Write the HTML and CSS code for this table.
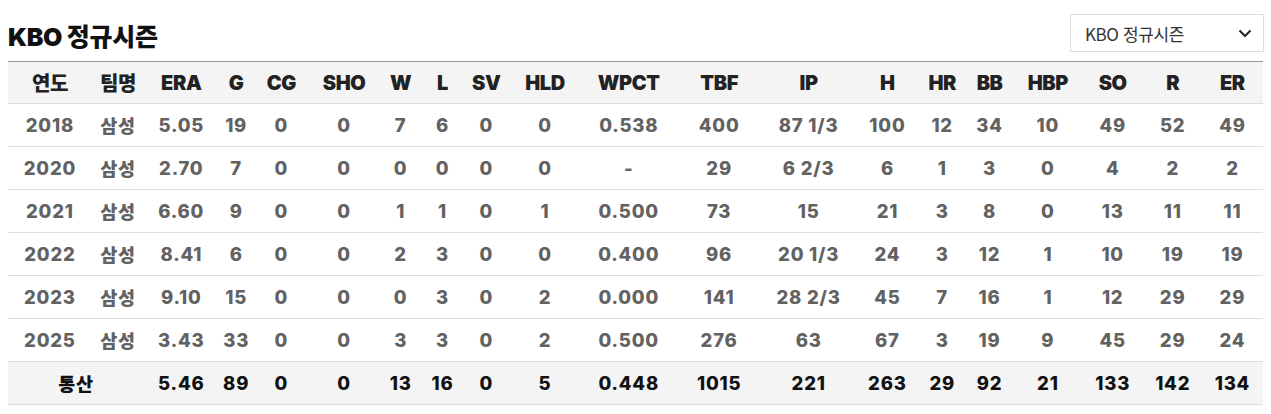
FILE: index.html
```html
<!DOCTYPE html>
<html lang="ko">
<head>
<meta charset="utf-8">
<link rel="stylesheet" href="styles.css">
</head>
<body>
<div class="wrap">
  <div class="top">
    <h2 class="title">KBO 정규시즌</h2>
    <div class="select">
      <span>KBO 정규시즌</span>
      <svg class="chev" width="14" height="9" viewBox="0 0 14 9"><path d="M1.5 1.5 L7 7 L12.5 1.5" fill="none" stroke="#222" stroke-width="2"/></svg>
    </div>
  </div>
  <table class="stats">
    <colgroup>
      <col class="c1"><col class="c2"><col class="c3"><col class="c4"><col class="c5"><col class="c6"><col class="c7"><col class="c8"><col class="c9"><col class="c10"><col class="c11"><col class="c12"><col class="c13"><col class="c14"><col class="c15"><col class="c16"><col class="c17"><col class="c18"><col class="c19"><col class="c20">
    </colgroup>
    <thead>
      <tr><th>연도</th><th>팀명</th><th>ERA</th><th>G</th><th>CG</th><th>SHO</th><th>W</th><th>L</th><th>SV</th><th>HLD</th><th>WPCT</th><th>TBF</th><th>IP</th><th>H</th><th>HR</th><th>BB</th><th>HBP</th><th>SO</th><th>R</th><th>ER</th></tr>
    </thead>
    <tbody>
      <tr><td>2018</td><td>삼성</td><td>5.05</td><td>19</td><td>0</td><td>0</td><td>7</td><td>6</td><td>0</td><td>0</td><td>0.538</td><td>400</td><td>87 1/3</td><td>100</td><td>12</td><td>34</td><td>10</td><td>49</td><td>52</td><td>49</td></tr>
      <tr><td>2020</td><td>삼성</td><td>2.70</td><td>7</td><td>0</td><td>0</td><td>0</td><td>0</td><td>0</td><td>0</td><td>-</td><td>29</td><td>6 2/3</td><td>6</td><td>1</td><td>3</td><td>0</td><td>4</td><td>2</td><td>2</td></tr>
      <tr><td>2021</td><td>삼성</td><td>6.60</td><td>9</td><td>0</td><td>0</td><td>1</td><td>1</td><td>0</td><td>1</td><td>0.500</td><td>73</td><td>15</td><td>21</td><td>3</td><td>8</td><td>0</td><td>13</td><td>11</td><td>11</td></tr>
      <tr><td>2022</td><td>삼성</td><td>8.41</td><td>6</td><td>0</td><td>0</td><td>2</td><td>3</td><td>0</td><td>0</td><td>0.400</td><td>96</td><td>20 1/3</td><td>24</td><td>3</td><td>12</td><td>1</td><td>10</td><td>19</td><td>19</td></tr>
      <tr><td>2023</td><td>삼성</td><td>9.10</td><td>15</td><td>0</td><td>0</td><td>0</td><td>3</td><td>0</td><td>2</td><td>0.000</td><td>141</td><td>28 2/3</td><td>45</td><td>7</td><td>16</td><td>1</td><td>12</td><td>29</td><td>29</td></tr>
      <tr><td>2025</td><td>삼성</td><td>3.43</td><td>33</td><td>0</td><td>0</td><td>3</td><td>3</td><td>0</td><td>2</td><td>0.500</td><td>276</td><td>63</td><td>67</td><td>3</td><td>19</td><td>9</td><td>45</td><td>29</td><td>24</td></tr>
    </tbody>
    <tfoot>
      <tr><td colspan="2">통산</td><td>5.46</td><td>89</td><td>0</td><td>0</td><td>13</td><td>16</td><td>0</td><td>5</td><td>0.448</td><td>1015</td><td>221</td><td>263</td><td>29</td><td>92</td><td>21</td><td>133</td><td>142</td><td>134</td></tr>
    </tfoot>
  </table>
</div>
</body>
</html>
```

FILE: styles.css
```css
* { box-sizing: border-box; }
body {
  margin: 0;
  background: #fff;
  font-family: Inter, "Noto Sans CJK KR", sans-serif;
}
.wrap {
  padding: 14px 8px 0 8px;
}
.top {
  display: flex;
  justify-content: space-between;
  align-items: center;
  height: 38px;
  margin-bottom: 9px;
}
.title {
  margin: 4px 0 0 0;
  font-size: 25px;
  font-weight: 900;
  color: #111;
  letter-spacing: -0.3px;
  font-family: Inter, "Noto Sans CJK KR", sans-serif;
}
.select {
  width: 194px;
  height: 38px;
  margin-right: -1px;
  border: 1px solid #ddd;
  display: flex;
  align-items: center;
  justify-content: space-between;
  padding: 0 11px 0 14px;
  font-size: 17px;
  color: #333;
  font-family: "Noto Sans CJK KR", sans-serif;
  letter-spacing: -0.4px;
}
.chev { display: block; }
.stats {
  width: 100%;
  border-collapse: collapse;
  table-layout: fixed;
  border-top: 1px solid #999;
}
.stats th, .stats td {
  text-align: center;
  padding: 0;
  white-space: nowrap;
}
.stats th {
  height: 42px;
  background: #f4f4f4;
  color: #222;
  font-size: 20px;
  font-weight: 900;
  border-bottom: 1px solid #ddd;
  letter-spacing: -0.4px;
}
.stats td {
  height: 43px;
  color: #626262;
  font-size: 18.5px;
  font-weight: 800;
  border-bottom: 1px solid #ddd;
  letter-spacing: 0.8px;
}
.stats tfoot td {
  background: #f4f4f4;
  color: #111;
}
.c1 { width: 83.8px; }
.c2 { width: 52.4px; }
.c3 { width: 74.2px; }
.c4 { width: 35.6px; }
.c5 { width: 54.6px; }
.c6 { width: 71.2px; }
.c7 { width: 41.8px; }
.c8 { width: 41.8px; }
.c9 { width: 45.8px; }
.c10 { width: 71.6px; }
.c11 { width: 96px; }
.c12 { width: 84.8px; }
.c13 { width: 94.2px; }
.c14 { width: 63.4px; }
.c15 { width: 46.2px; }
.c16 { width: 48.6px; }
.c17 { width: 68px; }
.c18 { width: 61.6px; }
.c19 { width: 58.4px; }
.c20 { width: 61px; }
```
